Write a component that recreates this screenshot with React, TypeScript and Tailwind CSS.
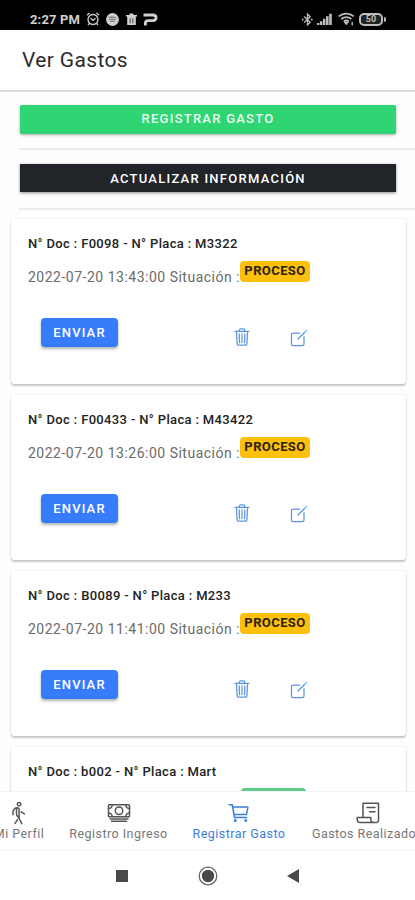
import { IoCartOutline, IoCashOutline, IoCreateOutline, IoTrashOutline, IoWalkOutline } from 'react-icons/io5';

const gastos = [
  { doc: 'F0098', placa: 'M3322', fecha: '2022-07-20 13:43:00' },
  { doc: 'F00433', placa: 'M43422', fecha: '2022-07-20 13:26:00' },
  { doc: 'B0089', placa: 'M233', fecha: '2022-07-20 11:41:00' },
];

function StatusBar() {
  return (
    <div className="flex h-[30px] shrink-0 items-center bg-black pl-[30px] pr-[29px] pt-2 text-[#d0d0d0]">
      <span className="w-[56px] whitespace-nowrap text-[13px] font-bold leading-none tracking-[0.15px]">2:27 PM</span>
      {/* alarm */}
      <svg className="h-[14px] w-[14px]" viewBox="0 0 14 14" fill="none" stroke="currentColor" strokeWidth="1.3">
        <circle cx="7" cy="7.5" r="5" />
        <path d="M1 3.2 3.6 1M13 3.2 10.4 1M4.5 6.3 7 8.4l2.5-2.1M3.3 11.5 2 13M10.7 11.5 12 13" />
      </svg>
      {/* spotify */}
      <svg className="ml-[6px] h-[13px] w-[13px]" viewBox="0 0 13 13">
        <circle cx="6.5" cy="6.5" r="6.4" fill="currentColor" />
        <path d="M2.8 4.5c2.4-.8 5.3-.6 7.5.5M3.3 6.5c2-.6 4.3-.4 6.2.5M3.9 8.4c1.6-.4 3.3-.3 4.7.4" fill="none" stroke="#555" strokeWidth="0.9" />
      </svg>
      {/* trash */}
      <svg className="ml-[7px] h-[13px] w-[11px]" viewBox="0 0 11 13">
        <path d="M0 2h3.5V.5h4V2H11v1.6H0zM1.2 3.6h8.6V12H1.2z" fill="currentColor" />
        <path d="M4.2 5.3v5M6.8 5.3v5" stroke="#333" strokeWidth="0.9" />
      </svg>
      <svg className="ml-[6px] h-[13px] w-[15px]" viewBox="0 0 15 13" fill="none" stroke="currentColor" strokeWidth="2.8">
        <path d="M.5 2h9.3c4.6 0 4.2 5.6 0 5.6H5.2C3.2 7.6 2.4 8.6 2.4 10v2.5" />
      </svg>
      <div className="ml-auto flex items-center text-[#bdbdbd]">
        {/* bluetooth */}
        <svg className="h-[13px] w-[11px]" viewBox="0 0 11 13" fill="none" stroke="currentColor" strokeWidth="1.3">
          <path d="m2.2 3.5 6 5.8L5.5 12V1l2.7 2.7-6 5.8" />
          <path d="M.6 5.5v2M9.8 5.5v2" strokeWidth="1.5" />
        </svg>
        <svg className="ml-[4px] h-[12px] w-[15px]" viewBox="0 0 15 12" fill="currentColor">
          <path d="M0 10h2.4v2H0zM3 8.2h2.4V12H3zM6 5.8h2.4V12H6zM9 3.3h2.6V12H9zM12.2.8h2.6V12h-2.6z" />
        </svg>
        {/* wifi */}
        <svg className="ml-[6px] h-[14px] w-[17px]" viewBox="0 0 17 14" fill="none" stroke="currentColor" strokeWidth="1.8">
          <path d="M.8 4.4c4.2-3.8 10.7-3.8 15 0M3.3 7c2.8-2.5 7.2-2.5 10 0M5.8 9.5c1.4-1.2 3.5-1.2 5 0" />
          <path d="m7 10.5 1.3 1.6 1.4-1.6zM14.2 10v3.5" strokeWidth="1.4" />
        </svg>
        <div className="ml-[4px] flex h-[13px] w-[24px] items-center justify-center rounded-[5px] border-2 border-[#bdbdbd] bg-[#222] text-[9px] font-bold leading-none">
          50
        </div>
        <div className="ml-px h-[5px] w-[2px] rounded-r bg-[#bdbdbd]" />
      </div>
    </div>
  );
}

function ReceiptIcon() {
  return (
    <svg className="h-[22px] w-[24px]" viewBox="0 0 24 22" fill="none" stroke="currentColor" strokeWidth="1.5" strokeLinejoin="round" strokeLinecap="round">
      <path d="M7 14.5V1.3h15.5v17a2.4 2.4 0 0 1-2.6 2.3H4.2c-1.8 0-3-1-3-3.6v-1.5h13.6v2c0 2 1.6 3.1 4 3.1" />
      <path d="M11 5.6h8M13.5 9.8H19" />
    </svg>
  );
}

function GastoCard({ doc, placa, fecha }: { doc: string; placa: string; fecha: string }) {
  return (
    <div className="h-[165px] shrink-0 rounded-[4px] bg-white pl-[17px] pt-[16px] shadow-[0_2px_2px_rgba(0,0,0,0.2),0_0_3px_rgba(0,0,0,0.1)]">
      <div className="h-[17px] whitespace-nowrap text-[13px] font-medium leading-[17px] tracking-[0.35px] text-[#222]">
        N° Doc : {doc} - N° Placa : {placa}
      </div>
      <div className="mt-[9px] flex h-[22px] items-start whitespace-nowrap">
        <span className="w-[212px] pt-[6px] text-[14px] leading-[20px] tracking-[0.5px] text-[#6b6b6b]">{fecha} Situación :</span>
        <span className="flex h-[21px] w-[70px] items-center justify-center rounded-[4px] bg-[#fdc10d] pb-px text-[13px] font-bold tracking-[0.4px] text-[#2b2308]">
          PROCESO
        </span>
      </div>
      <div className="mt-[35px] flex">
        <button className="ml-[13px] h-[29px] w-[77px] rounded-[4px] bg-[#377dfb] pt-px text-[13px] font-medium tracking-[1.15px] text-white shadow-[0_2px_3px_rgba(0,0,0,0.3)]">
          ENVIAR
        </button>
        <IoTrashOutline className="ml-[114px] mt-[9px] h-[20px] w-[20px] text-[#5b95df]" />
        <IoCreateOutline className="ml-[37px] mt-[10px] h-[20px] w-[20px] text-[#5b95df]" />
      </div>
    </div>
  );
}

export default function App() {
  return (
    <div className="flex h-[900px] w-[415px] flex-col overflow-hidden bg-white font-['Roboto',sans-serif]">
      <StatusBar />
      <header className="flex h-[62px] shrink-0 items-center border-b-2 border-[#d9dcdc] pl-[22px] pt-px text-[21px] tracking-[0.35px] text-[#2b2b2b]">
        Ver Gastos
      </header>

      <main className="flex min-h-0 flex-1 flex-col overflow-hidden bg-[#fefefe]">
        <div className="ml-[20px] mt-[13px] flex h-[29px] w-[376px] shrink-0 items-center justify-center rounded-[2px] bg-[#2fd573] pb-px text-[13px] font-medium tracking-[1.25px] text-[#eafff2] shadow-[0_1px_3px_rgba(0,0,0,0.35)]">
          REGISTRAR GASTO
        </div>
        <div className="ml-[19px] mt-[14px] h-[2px] shrink-0 bg-[#ebebeb]" />
        <div className="ml-[20px] mt-[14px] flex h-[28px] w-[376px] shrink-0 items-center justify-center bg-[#212428] pt-px text-[13px] font-medium tracking-[1.26px] text-white shadow-[0_1px_3px_rgba(0,0,0,0.45)]">
          ACTUALIZAR INFORMACIÓN
        </div>
        <div className="ml-[19px] mt-[16px] h-[2px] shrink-0 bg-[#ebebeb]" />

        <div className="ml-[11px] mt-[9px] flex w-[395px] flex-col gap-[11px]">
          {gastos.map((g) => (
            <GastoCard key={g.doc} {...g} />
          ))}
          <div className="h-[165px] shrink-0 rounded-[4px] bg-white pl-[17px] pt-[16px] shadow-[0_2px_2px_rgba(0,0,0,0.2),0_0_3px_rgba(0,0,0,0.1)]">
            <div className="whitespace-nowrap text-[13px] font-medium leading-[17px] tracking-[0.35px] text-[#222]">N° Doc : b002 - N° Placa : Mart</div>
            <div className="ml-[213px] mt-[8px] h-[21px] w-[65px] rounded-[4px] bg-[#5dcb8c]" />
          </div>
        </div>
      </main>

      <nav className="flex h-[59px] shrink-0 border-t border-[#f3f3f3] bg-white text-[12.5px] leading-[16px] tracking-[0.46px] text-[#777]">
        <div className="flex w-[56px] shrink-0 flex-col items-center pr-[18px] pt-[9px]">
          <IoWalkOutline className="h-[24px] w-[24px] text-[#555]" />
          <span className="mt-px whitespace-nowrap">Mi Perfil</span>
        </div>
        <div className="flex w-[125px] shrink-0 flex-col items-center pt-[9px]">
          <IoCashOutline className="h-[24px] w-[24px] text-[#555]" />
          <span className="mt-px whitespace-nowrap">Registro Ingreso</span>
        </div>
        <div className="flex w-[116px] shrink-0 flex-col items-center pt-[9px] text-[#3b7ddd]">
          <IoCartOutline className="h-[24px] w-[24px]" />
          <span className="mt-px whitespace-nowrap">Registrar Gasto</span>
        </div>
        <div className="flex w-[141px] shrink-0 flex-col items-center pt-[9px]">
          <div className="flex h-[24px] items-center text-[#555]">
            <ReceiptIcon />
          </div>
          <span className="mt-px whitespace-nowrap">Gastos Realizados</span>
        </div>
      </nav>

      {/* android navigation */}
      <div className="flex h-[50px] shrink-0 items-center border-t border-[#f5f5f5] bg-white pl-[116px]">
        <div className="h-[12px] w-[12px] bg-[#4a4a4a]" />
        <svg className="ml-[70px] h-[20px] w-[20px]" viewBox="0 0 20 20">
          <circle cx="10" cy="10" r="8.8" fill="none" stroke="#666" strokeWidth="1.3" />
          <circle cx="10" cy="10" r="6.2" fill="#4a4a4a" />
        </svg>
        <svg className="ml-[69px] h-[14px] w-[12px]" viewBox="0 0 12 14">
          <path d="M0 7 12 0v14z" fill="#4a4a4a" />
        </svg>
      </div>
    </div>
  );
}
